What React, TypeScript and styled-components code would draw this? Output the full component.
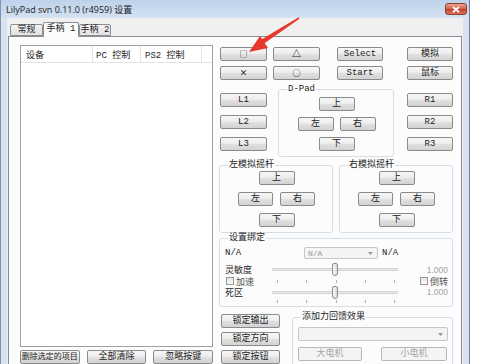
import styled, { createGlobalStyle } from 'styled-components'

const ui = `"Liberation Mono", "Noto Sans CJK SC", monospace`

const GlobalStyle = createGlobalStyle`
  html, body { margin: 0; padding: 0; background: #ffffff; }
  body { font-family: ${ui}; color: #1e1e1e; }
  * { box-sizing: border-box; }
`

const Screen = styled.div`
  position: relative;
  width: 480px;
  height: 364px;
  overflow: hidden;
  background: #ffffff;
`

const Window = styled.div`
  width: 470px;
  height: 384px;
  display: flex;
  flex-direction: column;
  border-left: 1px solid #8393a8;
  border-right: 1px solid #6f819a;
  background: #d7e3f0;
`

const TitleBar = styled.div`
  height: 18px;
  flex: none;
  display: flex;
  align-items: center;
  justify-content: space-between;
  padding: 0 2px 0 5px;
  background: linear-gradient(#bdd2ea, #d4e2f2);
`

const Title = styled.span`
  font-family: "Open Sans", "Noto Sans CJK SC", sans-serif;
  font-size: 9px;
  color: #1a1a1a;
`

const CloseButton = styled.div`
  width: 22px;
  height: 12px;
  border: 1px solid #8e3b2c;
  border-radius: 3px;
  background: linear-gradient(#e9a594, #d35f45 50%, #c4412a 55%, #d9765d);
  display: flex;
  align-items: center;
  justify-content: center;
`

const Frame = styled.div`
  flex: 1;
  display: flex;
  padding: 0 6px;
`

const Client = styled.div`
  flex: 1;
  display: flex;
  flex-direction: column;
  background: #f0f0f0;
  padding: 0 1px;
`

const TabStrip = styled.div`
  height: 18px;
  display: flex;
  align-items: flex-end;
  padding-left: 2px;
`

const Tab = styled.div<{ $active?: boolean; $w: number }>`
  width: ${(p) => p.$w}px;
  height: ${(p) => (p.$active ? 15 : 12)}px;
  margin-bottom: ${(p) => (p.$active ? -1 : 0)}px;
  position: relative;
  z-index: ${(p) => (p.$active ? 1 : 0)};
  border: 1px solid #8c8e94;
  border-bottom: ${(p) => (p.$active ? 'none' : '1px solid #8c8e94')};
  border-radius: 2px 2px 0 0;
  background: ${(p) => (p.$active ? '#fcfcfc' : 'linear-gradient(#f4f4f4, #e1e1e1)')};
  font-size: 9px;
  line-height: 11px;
  white-space: nowrap;
  display: flex;
  justify-content: center;
  align-items: ${(p) => (p.$active ? 'flex-start' : 'center')};
  padding-top: ${(p) => (p.$active ? 1 : 0)}px;
`

const Panel = styled.div`
  flex: 1;
  display: flex;
  gap: 6px;
  border: 1px solid #898c95;
  background: #fcfcfc;
  padding: 8px 8px 0 11px;
`

const LeftCol = styled.div`
  width: 193px;
  display: flex;
  flex-direction: column;
  gap: 3px;
`

const ListBox = styled.div`
  height: 302px;
  border: 1px solid #9aa1ab;
  background: #ffffff;
`

const ListHeader = styled.div`
  height: 17px;
  display: flex;
  border-bottom: 1px solid #e4e4e4;
`

const HeaderCell = styled.div<{ $w?: number; $pad: number }>`
  ${(p) => (p.$w ? `width: ${p.$w}px;` : 'flex: 1;')}
  display: flex;
  align-items: center;
  padding-left: ${(p) => p.$pad}px;
  border-right: 1px solid #e4e4e4;
  font-size: 9px;
  white-space: nowrap;
  &:last-child { border-right: none; }
`

const ButtonRow = styled.div<{ $gap: number }>`
  display: flex;
  gap: ${(p) => p.$gap}px;
`

const Button = styled.button<{ $w?: number; $grow?: boolean; $size?: number; $sym?: boolean }>`
  ${(p) => (p.$grow ? 'flex: 1;' : `width: ${p.$w ?? 47}px;`)}
  flex-shrink: 0;
  height: 14px;
  padding: 0;
  border: 1px solid #8a8a8a;
  border-radius: 2px;
  background: linear-gradient(#f7f7f7 0%, #ededed 45%, #dfdfdf 55%, #d3d3d3 100%);
  font-family: ${(p) => (p.$sym ? '"Noto Sans CJK SC", sans-serif' : ui)};
  font-weight: ${(p) => (p.$sym ? 700 : 400)};
  font-size: ${(p) => p.$size ?? 9}px;
  line-height: 12px;
  color: #222222;
  display: flex;
  align-items: center;
  justify-content: center;
  white-space: nowrap;
  overflow: hidden;
  &:disabled {
    border-color: #b7b7b7;
    background: #f4f4f4;
    color: #a4a4a4;
  }
`

const RightCol = styled.div`
  width: 234px;
  display: flex;
  flex-direction: column;
  padding-top: 2px;
`

const FaceGrid = styled.div`
  display: grid;
  grid-template-columns: 53px 64px 70px 46px;
  row-gap: 5px;
  padding-left: 1px;
`

const Middle = styled.div`
  display: flex;
  align-items: flex-start;
  margin-top: 4px;
  padding-left: 1px;
`

const ShoulderCol = styled.div<{ $ml: number }>`
  display: flex;
  flex-direction: column;
  gap: 8px;
  padding-top: 9px;
  margin-left: ${(p) => p.$ml}px;
`

const Group = styled.fieldset<{ $w: number; $ml?: number; $pt?: number; $pb?: number }>`
  width: ${(p) => p.$w}px;
  margin: 0 0 0 ${(p) => p.$ml ?? 0}px;
  min-width: 0;
  padding: ${(p) => p.$pt ?? 0}px 4px ${(p) => p.$pb ?? 5}px 5px;
  border: 1px solid #d6dfe6;
  border-radius: 3px;
`

const Legend = styled.legend`
  margin-left: 3px;
  padding: 0 1px;
  font-size: 9px;
  line-height: 10px;
  color: #1e1e1e;
`

const Cross = styled.div<{ $gap: number }>`
  display: flex;
  flex-direction: column;
  align-items: center;
  gap: ${(p) => p.$gap}px;
`

const Sticks = styled.div`
  display: flex;
  gap: 6px;
  margin-top: 3px;
`

const BindRow = styled.div`
  display: flex;
  align-items: center;
  height: 12px;
  margin-top: 4px;
  font-size: 9px;
`

const Combo = styled.div<{ $w?: number }>`
  width: ${(p) => (p.$w ? `${p.$w}px` : '100%')};
  height: ${(p) => (p.$w ? 12 : 14)}px;
  margin: 0 4px 0 0;
  flex-shrink: 0;
  display: flex;
  align-items: center;
  justify-content: space-between;
  padding: 0 4px 0 3px;
  border: 1px solid #c6c6c6;
  border-radius: 2px;
  background: #f4f4f4;
  color: #9a9a9a;
  font-size: 8px;
`

const BindLabel = styled.span`
  width: 79px;
`

const SliderGrid = styled.div`
  display: grid;
  grid-template-columns: 47px 126px 1fr;
  grid-template-rows: 13px 10px 12px 6px;
  margin-top: 4px;
  font-size: 9px;
  align-items: center;
`

const Slider = styled.div`
  position: relative;
  height: 13px;
  display: flex;
  align-items: center;
`

const Track = styled.div`
  flex: 1;
  height: 3px;
  border: 1px solid #d2d2d2;
  border-radius: 1px;
  background: #e9ebec;
`

const Thumb = styled.div`
  position: absolute;
  top: 0;
  width: 6px;
  height: 13px;
  margin-left: -3px;
  border: 1px solid #8d8d8d;
  border-radius: 2px 2px 3px 3px;
  background: linear-gradient(90deg, #fafafa, #dadada);
`

const Ticks = styled.div`
  display: flex;
  justify-content: space-between;
  align-items: center;
  padding: 0 3px 0 5px;
  height: 100%;
`

const Tick = styled.span`
  width: 1px;
  height: 3px;
  background: #b0b0b0;
`

const Value = styled.span`
  justify-self: end;
  font-family: "Liberation Sans", sans-serif;
  font-size: 8.5px;
  color: #a3a3a3;
`

const Check = styled.label<{ $end?: boolean }>`
  display: flex;
  align-items: center;
  gap: 2px;
  justify-self: ${(p) => (p.$end ? 'end' : 'start')};
  padding-left: ${(p) => (p.$end ? 0 : 1)}px;
  color: #555555;
  font-size: 9px;
`

const Box = styled.span`
  width: 8px;
  height: 8px;
  border: 1px solid #9a9a9a;
  background: linear-gradient(#e4e4e4, #fbfbfb);
`

const Bottom = styled.div`
  display: flex;
  align-items: flex-start;
  margin-top: 5px;
  padding-left: 2px;
`

const LockCol = styled.div`
  display: flex;
  flex-direction: column;
  gap: 4px;
  margin-top: 2px;
`

const FfbBody = styled.div`
  display: flex;
  flex-direction: column;
  gap: 6px;
`

const ArrowLayer = styled.svg`
  position: absolute;
  left: 0;
  top: 0;
  pointer-events: none;
`

const Caret = () => (
  <svg width="5" height="3" viewBox="0 0 5 3">
    <path d="M0 0 L5 0 L2.5 3 Z" fill="#9a9a9a" />
  </svg>
)

const StickGroup = ({ title }: { title: string }) => (
  <Group $w={114} $pt={1} $pb={5}>
    <Legend>{title}</Legend>
    <Cross $gap={7}>
      <Button $w={36}>上</Button>
      <ButtonRow $gap={7}>
        <Button $w={35}>左</Button>
        <Button $w={35}>右</Button>
      </ButtonRow>
      <Button $w={36}>下</Button>
    </Cross>
  </Group>
)

const App = () => {
  const sensitivity = 50
  const deadzone = 50

  return (
    <>
      <GlobalStyle />
      <Screen>
        <Window>
          <TitleBar>
            <Title>LilyPad svn 0.11.0 (r4959) 设置</Title>
            <CloseButton>
              <svg width="8" height="7" viewBox="0 0 8 7">
                <path d="M1 1 L7 6 M7 1 L1 6" stroke="#ffffff" strokeWidth="1.8" />
              </svg>
            </CloseButton>
          </TitleBar>
          <Frame>
            <Client>
              <TabStrip>
                <Tab $w={33}>常规</Tab>
                <Tab $w={36} $active>
                  手柄 1
                </Tab>
                <Tab $w={32}>手柄 2</Tab>
              </TabStrip>
              <Panel>
                <LeftCol>
                  <ListBox>
                    <ListHeader>
                      <HeaderCell $w={72} $pad={5}>
                        设备
                      </HeaderCell>
                      <HeaderCell $w={48} $pad={3}>
                        PC 控制
                      </HeaderCell>
                      <HeaderCell $w={61} $pad={4}>
                        PS2 控制
                      </HeaderCell>
                      <HeaderCell $pad={0} />
                    </ListHeader>
                  </ListBox>
                  <ButtonRow $gap={7}>
                    <Button $grow $size={8}>
                      删除选定的项目
                    </Button>
                    <Button $grow>全部清除</Button>
                    <Button $grow>忽略按键</Button>
                  </ButtonRow>
                </LeftCol>

                <RightCol>
                  <FaceGrid>
                    <Button $sym $size={8}>□</Button>
                    <Button $sym $size={9}>△</Button>
                    <Button $w={46}>Select</Button>
                    <Button $w={46}>模拟</Button>
                    <Button $sym $size={8}>×</Button>
                    <Button $sym $size={8}>○</Button>
                    <Button $w={46}>Start</Button>
                    <Button $w={46}>鼠标</Button>
                  </FaceGrid>

                  <Middle>
                    <ShoulderCol $ml={0}>
                      <Button>L1</Button>
                      <Button>L2</Button>
                      <Button>L3</Button>
                    </ShoulderCol>
                    <Group $w={116} $ml={11} $pt={3} $pb={5}>
                      <Legend>D-Pad</Legend>
                      <Cross $gap={6}>
                        <Button $w={36}>上</Button>
                        <ButtonRow $gap={6}>
                          <Button $w={36}>左</Button>
                          <Button $w={36}>右</Button>
                        </ButtonRow>
                        <Button $w={36}>下</Button>
                      </Cross>
                    </Group>
                    <ShoulderCol $ml={13}>
                      <Button $w={46}>R1</Button>
                      <Button $w={46}>R2</Button>
                      <Button $w={46}>R3</Button>
                    </ShoulderCol>
                  </Middle>

                  <Sticks>
                    <StickGroup title="左模拟摇杆" />
                    <StickGroup title="右模拟摇杆" />
                  </Sticks>

                  <Group $w={234} $pb={2}>
                    <Legend>设置绑定</Legend>
                    <BindRow>
                      <BindLabel>N/A</BindLabel>
                      <Combo $w={74}>
                        N/A
                        <Caret />
                      </Combo>
                      <span>N/A</span>
                    </BindRow>
                    <SliderGrid>
                      <span>灵敏度</span>
                      <Slider>
                        <Track />
                        <Thumb style={{ left: `${sensitivity}%` }} />
                      </Slider>
                      <Value>1.000</Value>

                      <Check>
                        <Box />
                        加速
                      </Check>
                      <Ticks>
                        <Tick />
                        <Tick />
                        <Tick />
                        <Tick />
                        <Tick />
                      </Ticks>
                      <Check $end>
                        <Box />
                        倒转
                      </Check>

                      <span>死区</span>
                      <Slider>
                        <Track />
                        <Thumb style={{ left: `${deadzone}%` }} />
                      </Slider>
                      <Value>1.000</Value>

                      <span />
                      <Ticks>
                        <Tick />
                        <Tick />
                        <Tick />
                        <Tick />
                        <Tick />
                      </Ticks>
                      <span />
                    </SliderGrid>
                  </Group>

                  <Bottom>
                    <LockCol>
                      <Button $w={59}>锁定输出</Button>
                      <Button $w={59}>锁定方向</Button>
                      <Button $w={59}>锁定按钮</Button>
                    </LockCol>
                    <Group $w={161} $ml={12} $pt={5} $pb={6}>
                      <Legend>添加力回馈效果</Legend>
                      <FfbBody>
                        <Combo>
                          <span />
                          <Caret />
                        </Combo>
                        <ButtonRow $gap={19}>
                          <Button $w={64} disabled>
                            大电机
                          </Button>
                          <Button $w={66} disabled>
                            小电机
                          </Button>
                        </ButtonRow>
                      </FfbBody>
                    </Group>
                  </Bottom>
                </RightCol>
              </Panel>
            </Client>
          </Frame>
        </Window>

        <ArrowLayer width="480" height="364" viewBox="0 0 480 364">
          <polygon points="299.4,18.7 298.6,17.3 260.6,39.9 263.4,44.1" fill="#e8372b" />
          <polygon points="249,52 260,36 268,48" fill="#e8372b" />
        </ArrowLayer>
      </Screen>
    </>
  )
}

export default App
